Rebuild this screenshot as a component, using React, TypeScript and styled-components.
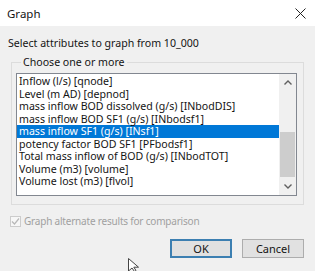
import React from 'react';
import styled, { createGlobalStyle } from 'styled-components';

const GlobalStyle = createGlobalStyle`
  html, body {
    margin: 0;
    padding: 0;
    background: #f0f0f0;
  }
`;

const Window = styled.div`
  position: relative;
  width: 315px;
  height: 271px;
  background: #f0f0f0;
  font-family: "Noto Sans", "Open Sans", sans-serif;
  font-size: 10.6px;
  color: #141414;
  overflow: hidden;
  display: flex;
  flex-direction: column;
`;

const TitleBar = styled.div`
  height: 26px;
  background: #ffffff;
  display: flex;
  align-items: center;
  justify-content: space-between;
  padding: 0 9px 0 7px;
  font-size: 11.5px;
`;

const Body = styled.div`
  padding: 9px 11px 0 8px;
  display: flex;
  flex-direction: column;
`;

const Prompt = styled.div`
  line-height: 16px;
  margin-bottom: 4px;
`;

const GroupBox = styled.fieldset`
  margin: 0 0 0 3px;
  padding: 4px 6px 8px 4px;
  border: 1px solid #dcdcdc;
  min-width: 0;
`;

const Legend = styled.legend`
  padding: 0 2px;
  margin-left: 5px;
  line-height: 14px;
`;

const ListBox = styled.div`
  height: 121px;
  border: 1px solid #828790;
  background: #ffffff;
  display: flex;
`;

const Items = styled.div`
  flex: 1;
  padding-top: 1px;
`;

const Item = styled.div<{ $selected?: boolean }>`
  height: 12.5px;
  line-height: 12.5px;
  padding-left: 2px;
  white-space: nowrap;
  background: ${(p) => (p.$selected ? '#0078d7' : 'transparent')};
  color: ${(p) => (p.$selected ? '#ffffff' : '#141414')};
`;

const ScrollBar = styled.div`
  width: 17px;
  background: #f0f0f0;
  display: flex;
  flex-direction: column;
  align-items: center;
`;

const ScrollArrow = styled.div`
  height: 17px;
  width: 17px;
  display: flex;
  align-items: center;
  justify-content: center;
`;

const Track = styled.div`
  flex: 1;
  width: 15px;
  display: flex;
  flex-direction: column;
`;

const Thumb = styled.div`
  margin-top: 41px;
  height: 45px;
  background: #cdcdcd;
`;

const CheckRow = styled.label`
  display: flex;
  align-items: center;
  gap: 3px;
  margin: 9px 0 0 2px;
  color: #a0a0a0;
  font-size: 10px;
  letter-spacing: -0.2px;
  line-height: 14px;
`;

const CheckBox = styled.span`
  width: 11px;
  height: 11px;
  border: 1px solid #cccccc;
  background: #f7f7f7;
  box-sizing: border-box;
  display: flex;
  align-items: center;
  justify-content: center;
`;

const ButtonRow = styled.div`
  display: flex;
  justify-content: flex-end;
  gap: 10px;
  margin-top: 11px;
`;

const Button = styled.button<{ $default?: boolean }>`
  width: 62px;
  height: 19px;
  padding: 0;
  font-family: inherit;
  font-size: 11px;
  color: #141414;
  background: #e1e1e1;
  border: ${(p) => (p.$default ? '2px solid #3c7fb1' : '1px solid #adadad')};
  box-sizing: border-box;
`;

const Cursor = styled.svg`
  position: absolute;
  left: 128px;
  top: 258px;
`;

const items = [
  'Inflow (l/s) [qnode]',
  'Level (m AD) [depnod]',
  'mass inflow BOD dissolved (g/s) [INbodDIS]',
  'mass inflow BOD SF1 (g/s) [INbodsf1]',
  'mass inflow SF1 (g/s) [INsf1]',
  'potency factor BOD SF1 [PFbodsf1]',
  'Total mass inflow of BOD (g/s) [INbodTOT]',
  'Volume (m3) [volume]',
  'Volume lost (m3) [flvol]',
];

const App: React.FC = () => {
  return (
    <>
      <GlobalStyle />
      <Window>
        <TitleBar>
          <span>Graph</span>
          <svg width="11" height="11" viewBox="0 0 11 11">
            <path d="M0.5 0.5 L10.5 10.5 M10.5 0.5 L0.5 10.5" stroke="#222" strokeWidth="1" />
          </svg>
        </TitleBar>
        <Body>
          <Prompt>Select attributes to graph from 10_000</Prompt>
          <GroupBox>
            <Legend>Choose one or more</Legend>
            <ListBox>
              <Items>
                {items.map((t, i) => (
                  <Item key={t} $selected={i === 4}>
                    {t}
                  </Item>
                ))}
              </Items>
              <ScrollBar>
                <ScrollArrow>
                  <svg width="8" height="5" viewBox="0 0 8 5">
                    <path d="M0.5 4.5 L4 1 L7.5 4.5" fill="none" stroke="#606060" strokeWidth="1.4" />
                  </svg>
                </ScrollArrow>
                <Track>
                  <Thumb />
                </Track>
                <ScrollArrow>
                  <svg width="8" height="5" viewBox="0 0 8 5">
                    <path d="M0.5 0.5 L4 4 L7.5 0.5" fill="none" stroke="#606060" strokeWidth="1.4" />
                  </svg>
                </ScrollArrow>
              </ScrollBar>
            </ListBox>
          </GroupBox>
          <CheckRow>
            <CheckBox>
              <svg width="9" height="9" viewBox="0 0 9 9">
                <path d="M1 4.5 L3.5 7 L8 1.5" fill="none" stroke="#b8b8b8" strokeWidth="1.2" />
              </svg>
            </CheckBox>
            Graph alternate results for comparison
          </CheckRow>
          <ButtonRow>
            <Button $default>OK</Button>
            <Button>Cancel</Button>
          </ButtonRow>
        </Body>
        <Cursor width="12" height="14" viewBox="0 0 12 14">
          <path d="M0.5 0.5 L0.5 13 L4 10 L6.5 13.5 L8 12.5 L5.8 9.2 L10.5 9.2 Z" fill="#ffffff" stroke="#444" strokeWidth="1" />
        </Cursor>
      </Window>
    </>
  );
};

export default App;
